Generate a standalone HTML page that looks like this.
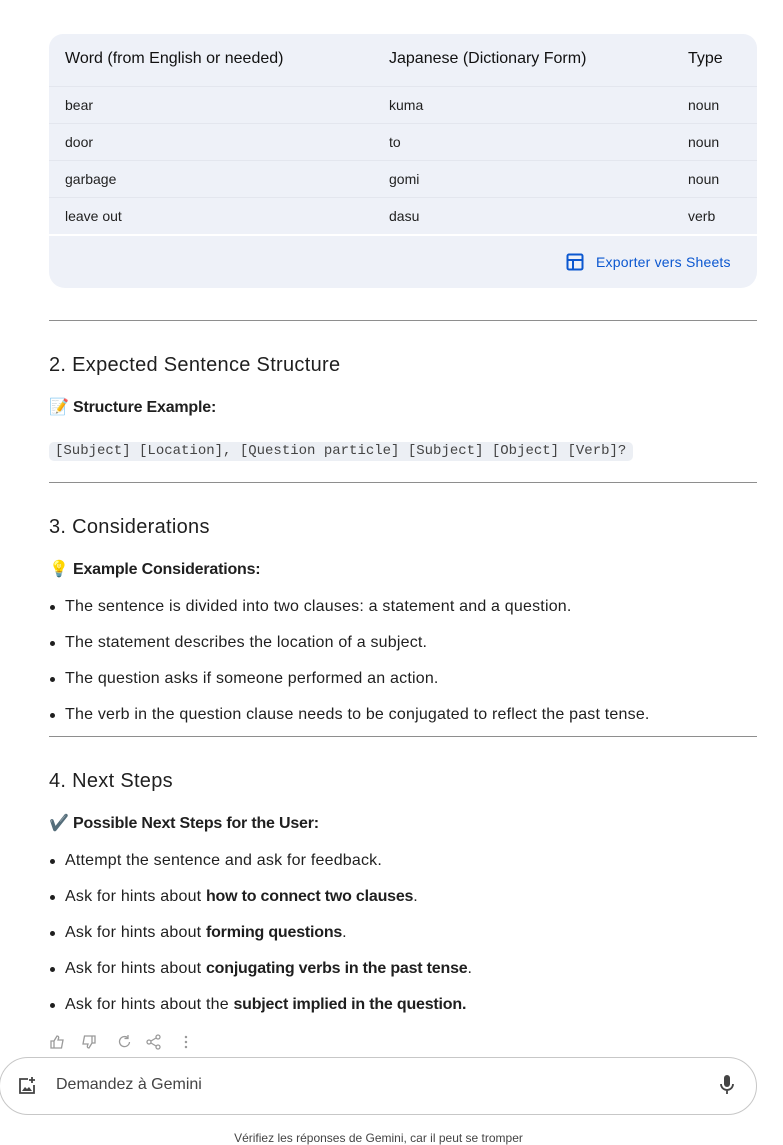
<!DOCTYPE html>
<html><head><meta charset="utf-8"><style>
*{margin:0;padding:0;box-sizing:border-box}
body{width:783px;height:1143px;overflow:hidden;background:#fff;font-family:"Liberation Sans",sans-serif;color:#1f1f1f;position:relative}
.a{position:absolute;white-space:nowrap}
.tbl{position:absolute;left:49px;top:34px;width:708px;height:200px;background:#eef1f8;border-radius:14px 14px 0 0}
.row{position:absolute;left:0;width:708px;height:37px;border-top:1px solid #e3e6ee;font-size:14px;line-height:37px}
.row span{position:absolute}
.foot{position:absolute;left:49px;top:236px;width:708px;height:52px;background:#eef1f8;border-radius:0 0 16px 16px}
hr{position:absolute;left:49px;width:708px;border:0;border-top:1px solid #8e8e8e;height:0}
h2{position:absolute;left:49px;font-size:20px;font-weight:normal;line-height:24px;letter-spacing:0.3px}
.sub{position:absolute;left:49px;font-size:16px;font-weight:bold;line-height:20px;letter-spacing:-0.2px}
.li{position:absolute;left:49px;font-size:16px;line-height:20px;white-space:nowrap;letter-spacing:0.2px}
.li:before{content:"";position:absolute;left:1px;top:8px;width:5px;height:5px;border-radius:50%;background:#1f1f1f}
.li span{margin-left:16px}
b{font-weight:bold;letter-spacing:-0.2px}
.hd{position:absolute;top:16px;font-size:16px;color:#111}
</style></head><body>
<div class="tbl">
 <div class="hd" style="left:16px">Word (from English or needed)</div>
 <div class="hd" style="left:340px">Japanese (Dictionary Form)</div>
 <div class="hd" style="left:639px">Type</div>
 <div class="row" style="top:52px"><span style="left:16px">bear</span><span style="left:340px">kuma</span><span style="left:639px">noun</span></div>
 <div class="row" style="top:89px"><span style="left:16px">door</span><span style="left:340px">to</span><span style="left:639px">noun</span></div>
 <div class="row" style="top:126px"><span style="left:16px">garbage</span><span style="left:340px">gomi</span><span style="left:639px">noun</span></div>
 <div class="row" style="top:163px"><span style="left:16px">leave out</span><span style="left:340px">dasu</span><span style="left:639px">verb</span></div>
</div>
<div class="foot">
 <svg class="a" style="left:517px;top:17px" width="18" height="18" viewBox="0 0 18 18"><rect x="1.5" y="1.5" width="15" height="15" rx="1.5" fill="none" stroke="#0b57d0" stroke-width="2"/><path d="M1.5 7h15M7 7v9.5" stroke="#0b57d0" stroke-width="2"/></svg>
 <div class="a" style="left:547px;top:18px;font-size:14px;color:#0b57d0;letter-spacing:0.2px">Exporter vers Sheets</div>
</div>
<hr style="top:320px">
<h2 style="top:353px">2. Expected Sentence Structure</h2>
<div class="sub" style="top:398px">📝 Structure Example:</div>
<div class="a" style="left:49px;top:442px;height:19px;width:584px;background:#eceff4;border-radius:5px;font-family:'Liberation Mono',monospace;font-size:14px;line-height:19px;color:#444;padding-left:6px">[Subject] [Location], [Question particle] [Subject] [Object] [Verb]?</div>
<hr style="top:482px">
<h2 style="top:515px">3. Considerations</h2>
<div class="sub" style="top:560px">💡 Example Considerations:</div>
<div class="li" style="top:597px"><span>The sentence is divided into two clauses: a statement and a question.</span></div>
<div class="li" style="top:633px"><span>The statement describes the location of a subject.</span></div>
<div class="li" style="top:669px"><span>The question asks if someone performed an action.</span></div>
<div class="li" style="top:705px"><span>The verb in the question clause needs to be conjugated to reflect the past tense.</span></div>
<hr style="top:736px">
<h2 style="top:769px">4. Next Steps</h2>
<div class="sub" style="top:814px">✔️ Possible Next Steps for the User:</div>
<div class="li" style="top:851px"><span>Attempt the sentence and ask for feedback.</span></div>
<div class="li" style="top:887px"><span>Ask for hints about <b>how to connect two clauses</b>.</span></div>
<div class="li" style="top:923px"><span>Ask for hints about <b>forming questions</b>.</span></div>
<div class="li" style="top:959px"><span>Ask for hints about <b>conjugating verbs in the past tense</b>.</span></div>
<div class="li" style="top:995px"><span>Ask for hints about the <b>subject implied in the question.</b></span></div>
<svg class="a" style="left:49px;top:1034px" width="145" height="16" viewBox="0 0 145 16" fill="none" stroke="#9a9a9a" stroke-width="1.3">
 <path d="M2 7h3v7H2zM5 7l3-5c1.5 0 2 1 1.5 2.5L9 6h5l-1.5 8H5"/>
 <path d="M46 9h-3V2h3zM43 9l-3 5c-1.5 0-2-1-1.5-2.5L39 10h-5l1.5-8H43"/>
 <path d="M79 4a5 5 0 1 0 1.5 4M79 1v3.5h-3.5"/>
 <circle cx="109" cy="3" r="2"/><circle cx="100" cy="8" r="2"/><circle cx="109" cy="13" r="2"/><path d="M102 7l5-3M102 9l5 3"/>
 <circle cx="137" cy="3" r=".6" fill="#9a9a9a"/><circle cx="137" cy="8" r=".6" fill="#9a9a9a"/><circle cx="137" cy="13" r=".6" fill="#9a9a9a"/>
</svg>
<div class="a" style="left:-1px;top:1057px;width:758px;height:58px;border:1px solid #c7c7c7;border-radius:29px"></div>
<svg class="a" style="left:17px;top:1076px" width="20" height="20" viewBox="0 0 20 20" fill="none" stroke="#444" stroke-width="1.8"><path d="M11 3H3v14h14V9"/><path d="M15 1v6M12 4h6" /><path d="M5 15l3-4 2 2 2-2 3 4z" fill="#444" stroke="none"/></svg>
<div class="a" style="left:56px;top:1076px;font-size:16px;color:#444">Demandez à Gemini</div>
<svg class="a" style="left:718px;top:1074px" width="18" height="22" viewBox="0 0 18 22"><rect x="6" y="1" width="6" height="12" rx="3" fill="#444"/><path d="M3 10a6 6 0 0 0 12 0M9 16v4" stroke="#444" stroke-width="1.8" fill="none"/></svg>
<div class="a" style="left:0;width:757px;text-align:center;top:1131px;font-size:12px;color:#444">Vérifiez les réponses de Gemini, car il peut se tromper</div>
</body></html>
